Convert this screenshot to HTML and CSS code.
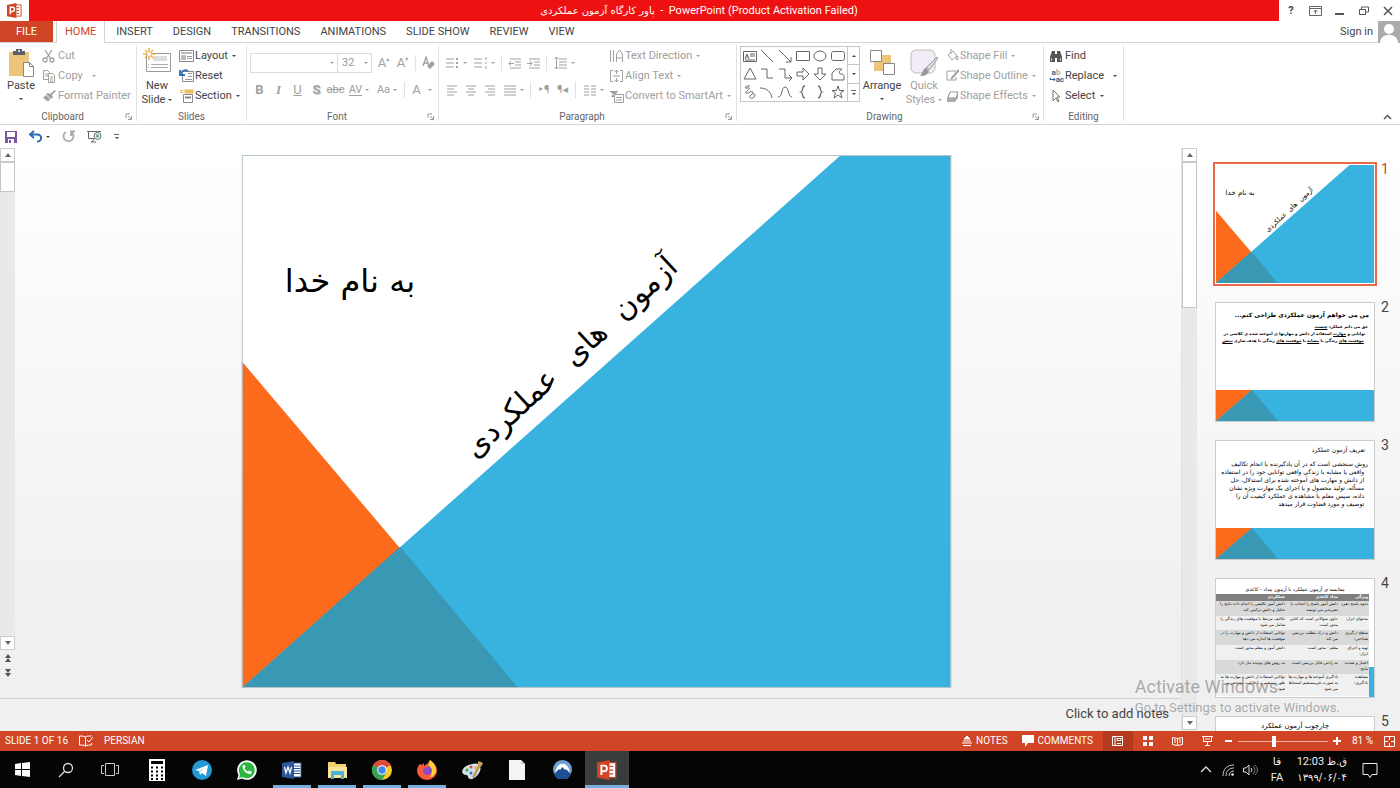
FILE: index.html
```
<!DOCTYPE html>
<html lang="en">
<head>
    <meta charset="utf-8">
    <title>PowerPoint</title>
    <link rel="stylesheet" href="styles.css">
</head>
<body>
    <svg class="defs" aria-hidden="true">
        <symbol id="ppt" viewBox="0 0 16 16"><path d="M9 2h6v12H9z" fill="#fff" stroke="#d04525"/><path d="M10 5h3M10 8h3M10 11h3" stroke="#d04525"/><path d="M0 2l10-2v16L0 14z" fill="#d04525"/><path d="M3.500 12V4.500h2.200a2 2 0 0 1 0 4.500H3.500" fill="none" stroke="#fff" stroke-width="1.500"/></symbol>
        <symbol id="launch" viewBox="0 0 8 8"><path d="M1 5V1h4M3 3l3 3M6.500 3v3.500H3" fill="none" stroke="currentColor"/></symbol>
        <symbol id="up" viewBox="0 0 8 8"><path d="M1 6l3-4 3 4z" fill="currentColor"/></symbol>
        <symbol id="down" viewBox="0 0 8 8"><path d="M1 2l3 4 3-4z" fill="currentColor"/></symbol>
        <symbol id="lines" viewBox="0 0 14 12"><path d="M1 2h12M1 5h12M1 8h12M1 11h12" stroke="currentColor"/></symbol>
        <symbol id="band" viewBox="0 0 158 118"><path d="M0 87h158v31H0z" fill="#38b3e0"/><path d="M0 87h36L0 118z" fill="#fb6b1b"/><path d="M36 87l26 31H0z" fill="#3998b3"/></symbol>
    </svg>

    <header class="titlebar">
        <svg class="app-icon" width="15" height="15"><use href="#ppt"/></svg>
        <h1 class="title"><bdi class="fa">پاور کارگاه آزمون عملکردی</bdi>&nbsp; - &nbsp;PowerPoint (Product Activation Failed)</h1>
        <div class="window-buttons">
            <button aria-label="Help"><b>?</b></button>
            <button aria-label="Ribbon options"><svg width="13" height="10" viewBox="0 0 13 10" fill="none" stroke="#666"><path d="M.5.500h12v9H.500zM.500 2.500h12M6.500 8V4M4.500 6l2-2 2 2"/></svg></button>
            <button aria-label="Minimize"><svg width="10" height="10" viewBox="0 0 10 10"><path d="M0 8h9" stroke="#555" stroke-width="2"/></svg></button>
            <button aria-label="Restore"><svg width="10" height="10" viewBox="0 0 10 10" fill="none" stroke="#555"><path d="M.5 3.500h6v5h-6zM2.500 3V1h7v5H7"/></svg></button>
            <button aria-label="Close"><svg width="10" height="10" viewBox="0 0 10 10"><path d="M1 1l8 8M9 1l-8 8" stroke="#555" stroke-width="1.500"/></svg></button>
        </div>
    </header>

    <nav class="tabs">
        <button class="tab-file">FILE</button>
        <button class="tab active">HOME</button>
        <button class="tab">INSERT</button>
        <button class="tab">DESIGN</button>
        <button class="tab">TRANSITIONS</button>
        <button class="tab">ANIMATIONS</button>
        <button class="tab">SLIDE SHOW</button>
        <button class="tab">REVIEW</button>
        <button class="tab">VIEW</button>
        <a class="sign-in" href="#">Sign in</a>
        <svg class="avatar" width="22" height="22" viewBox="0 0 22 22"><path d="M0 0h22v22H0z" fill="#ababab"/><circle cx="11" cy="8" r="5" fill="#fff"/><path d="M2 22c0-11 18-11 18 0z" fill="#fff"/></svg>
    </nav>

    <div class="ribbon">
        <section class="group clipboard">
            <div class="group-body">
                <button class="big">
                    <svg width="27" height="30" viewBox="0 0 27 30"><path d="M1 4h20v24H1z" fill="#ecc57a"/><path d="M5 3h3V1h6v2h3v4H5z" fill="#5a5f6b"/><circle cx="11" cy="3" r="1" fill="#fff"/><path d="M15.500 14.500h6l4 4v10h-10z" fill="#fff" stroke="#888"/><path d="M21.500 14.500v4h4" fill="none" stroke="#888"/></svg>
                    Paste<i class="caret"></i>
                </button>
                <div class="stack off">
                    <button><svg width="14" height="14" viewBox="0 0 14 14" fill="none" stroke="currentColor" stroke-width="1.300"><path d="M3 1l6 9M10 1L4 10"/><circle cx="3" cy="11" r="2"/><circle cx="10" cy="11" r="2"/></svg>Cut</button>
                    <button><svg width="14" height="14" viewBox="0 0 14 14" fill="#fff" stroke="currentColor"><path d="M1.500 1.500h4l2 2v7h-6zM3 5h3M3 7h3"/><path d="M6.500 4.500h4l2 2v7h-6zM8 8h3M8 10h3M8 12h3"/></svg>Copy<i class="caret far"></i></button>
                    <button><svg width="14" height="14" viewBox="0 0 14 14" fill="currentColor"><path d="M13 1l1 1-4 4 1 2-2 2-5-5 2-1 2 1zM4 6l4 4-2 3-1-2-1 1-1-2-2-1z"/></svg>Format Painter</button>
                </div>
            </div>
            <div class="group-label">Clipboard<button aria-label="Clipboard options"><svg width="8" height="8"><use href="#launch"/></svg></button></div>
        </section>

        <section class="group slides">
            <div class="group-body">
                <button class="big">
                    <svg width="29" height="30" viewBox="0 0 29 30"><path d="M3.500 5.500h24v18h-24z" fill="#fff" stroke="#999"/><path d="M10 8h14v5H10z" fill="#ddd"/><path d="M8 16.500h17M8 19.500h17M5 16.500h1M5 19.500h1" stroke="#aaa"/><path d="M6 0v12M0 6h12M2 2l8 8M10 2l-8 8" stroke="#e8b34f" stroke-width="1.500"/><circle cx="6" cy="6" r="2" fill="#fff"/></svg>
                    New<span>Slide<i class="caret"></i></span>
                </button>
                <div class="stack">
                    <button><svg width="15" height="14" viewBox="0 0 15 14"><path d="M.5 1.500h14v11H.500z" fill="#fff" stroke="#888"/><path d="M2 3h11v2H2zM2 6h5v5H2z" fill="#bbb"/><path d="M8 7.500h5M8 9.500h5" stroke="#999"/></svg>Layout<i class="caret"></i></button>
                    <button><svg width="15" height="14" viewBox="0 0 15 14"><path d="M3.500 2.500h11v10h-11z" fill="#fff" stroke="#888"/><path d="M9 4.500h4M9 7.500h4M6 10.500h7" stroke="#999"/><path d="M1 1v5h5M1 6c1-4 5-6 8-4" fill="none" stroke="#2e75b6" stroke-width="1.800"/></svg>Reset</button>
                    <button><svg width="15" height="14" viewBox="0 0 15 14"><path d="M1 1.500h3M1 3.500h3M6 1h8v3H6z" fill="#ecc57a" stroke="#e8b34f"/><path d="M4.500 5.500h9v8h-9z" fill="#fff" stroke="#888"/><path d="M6 8.500h6" stroke="#888" stroke-width="2"/></svg>Section<i class="caret"></i></button>
                </div>
            </div>
            <div class="group-label">Slides</div>
        </section>

        <section class="group font">
            <div class="group-body two-rows off">
                <div class="tools">
                    <span class="combo font-name"><select aria-label="Font"><option></option></select><i class="caret"></i></span>
                    <span class="combo font-size"><select aria-label="Font size"><option>32</option></select><i class="caret"></i></span>
                    <button class="letter grow">A<sup>▴</sup></button>
                    <button class="letter">A<sup>▾</sup></button>
                    <hr>
                    <button aria-label="Clear formatting"><svg width="14" height="14" viewBox="0 0 14 14"><path d="M1 10l3-9 3 9M2 7h4" fill="none" stroke="currentColor" stroke-width="1.300"/><path d="M5 10l5-5 3 3-5 5z" fill="currentColor"/></svg></button>
                </div>
                <div class="tools">
                    <button class="letter"><b>B</b></button>
                    <button class="letter serif"><b><i>I</i></b></button>
                    <button class="letter"><u>U</u></button>
                    <button class="letter shadow"><b>S</b></button>
                    <button><s>abc</s></button>
                    <button class="wide"><span class="spacing">AV</span><i class="caret"></i></button>
                    <button class="wide">Aa<i class="caret"></i></button>
                    <hr>
                    <button class="wide letter">A<i class="caret far"></i></button>
                </div>
            </div>
            <div class="group-label">Font<button aria-label="Font options"><svg width="8" height="8"><use href="#launch"/></svg></button></div>
        </section>

        <section class="group paragraph">
            <div class="group-body">
                <div class="two-rows off">
                    <div class="tools">
                        <button class="wide" aria-label="Bullets"><svg width="14" height="12" viewBox="0 0 14 12"><path d="M0 2h8M0 6h8M0 10h8" stroke="currentColor"/><path d="M10 1h2v2h-2zM10 5h2v2h-2zM10 9h2v2h-2z" fill="currentColor"/></svg><i class="caret"></i></button>
                        <button class="wide" aria-label="Numbering"><svg width="14" height="12" viewBox="0 0 14 12"><path d="M0 2h8M0 6h8M0 10h8M12 0v3M12 5v2M12 9v3" stroke="currentColor"/></svg><i class="caret"></i></button>
                        <hr>
                        <button aria-label="Decrease indent"><svg width="14" height="12" viewBox="0 0 14 12"><path d="M2 2h11M7 5h6M7 8h6M2 11h11M1 6.500h5M3 4L1 6.500 3 9" fill="none" stroke="currentColor"/></svg></button>
                        <button aria-label="Increase indent"><svg width="14" height="12" viewBox="0 0 14 12"><path d="M2 2h11M7 5h6M7 8h6M2 11h11M0 6.500h5M3 4l2 2.500L3 9" fill="none" stroke="currentColor"/></svg></button>
                        <hr>
                        <button class="wide" aria-label="Line spacing"><svg width="14" height="14" viewBox="0 0 14 14"><path d="M5 3h8M5 6h8M5 9h8M5 12h8M2.500 1v12M.500 3l2-2 2 2M.500 11l2 2 2-2" fill="none" stroke="currentColor"/></svg><i class="caret"></i></button>
                    </div>
                    <div class="tools">
                        <button aria-label="Align left"><svg width="12" height="12" viewBox="0 0 12 12"><path d="M1 2h10M1 5h7M1 8h10M1 11h7" stroke="currentColor"/></svg></button>
                        <button aria-label="Center"><svg width="12" height="12" viewBox="0 0 12 12"><path d="M1 2h10M3 5h6M1 8h10M3 11h6" stroke="currentColor"/></svg></button>
                        <button aria-label="Align right"><svg width="12" height="12" viewBox="0 0 12 12"><path d="M1 2h10M4 5h7M1 8h10M4 11h7" stroke="currentColor"/></svg></button>
                        <button class="wide" aria-label="Justify"><svg width="14" height="12"><use href="#lines"/></svg><i class="caret"></i></button>
                        <hr>
                        <button aria-label="Left to right">‣¶</button>
                        <button aria-label="Right to left">¶◂</button>
                        <hr>
                        <button class="wide" aria-label="Columns"><svg width="14" height="12" viewBox="0 0 14 12"><path d="M1 2h5M1 5h5M1 8h5M1 11h5M8 2h5M8 5h5M8 8h5M8 11h5" stroke="currentColor"/></svg><i class="caret"></i></button>
                    </div>
                </div>
                <div class="stack off">
                    <button><svg width="15" height="14" viewBox="0 0 15 14" fill="none" stroke="currentColor"><path d="M1.500 1v12M4.500 1v12M7.500 5v8M13.500 5v8M7.500 9h6M7.500 5l3-4 3 4"/></svg>Text Direction<i class="caret"></i></button>
                    <button><svg width="15" height="14" viewBox="0 0 15 14" fill="none" stroke="currentColor"><path d="M4 1.500H1.500v11H4M11 1.500h2.500v11H11M4 7h7M7.500 1v4M7.500 9v4M5.500 3l2-2 2 2M5.500 11l2 2 2-2"/></svg>Align Text<i class="caret"></i></button>
                    <button><svg width="15" height="14" viewBox="0 0 15 14"><path d="M0 2h9l-2 3H4l2 3H2l2-3z" fill="currentColor"/><path d="M5.500 5.500h9v8h-9zM7 8.500h6M7 11h6" fill="#fff" stroke="currentColor"/></svg>Convert to SmartArt<i class="caret"></i></button>
                </div>
            </div>
            <div class="group-label">Paragraph<button aria-label="Paragraph options"><svg width="8" height="8"><use href="#launch"/></svg></button></div>
        </section>

        <section class="group drawing">
            <div class="group-body">
                <div class="gallery">
                    <div class="shapes">
                        <svg viewBox="0 0 16 16"><path d="M1.500 3.500h13v10h-13z"/><path d="M3 11l2-5 2 5M4 9h2M8 6h5M8 8h5M3 12h10"/></svg>
                        <svg viewBox="0 0 16 16"><path d="M2 2l12 12"/></svg>
                        <svg viewBox="0 0 16 16"><path d="M2 2l12 12M14 9v5H9"/></svg>
                        <svg viewBox="0 0 16 16"><path d="M1.500 3.500h13v9h-13z"/></svg>
                        <svg viewBox="0 0 16 16"><ellipse cx="8" cy="8" rx="6" ry="5"/></svg>
                        <svg viewBox="0 0 16 16"><rect x="1.500" y="3.500" width="13" height="9" rx="2"/></svg>
                        <svg viewBox="0 0 16 16"><path d="M8 2l6 11H2z"/></svg>
                        <svg viewBox="0 0 16 16"><path d="M2 3h6v9h6"/></svg>
                        <svg viewBox="0 0 16 16"><path d="M2 3h6v9h6M12 9l3 3-3 3"/></svg>
                        <svg viewBox="0 0 16 16"><path d="M2 6h6V2l6 6-6 6v-4H2z"/></svg>
                        <svg viewBox="0 0 16 16"><path d="M6 2v6H2l6 6 6-6h-4V2z"/></svg>
                        <svg viewBox="0 0 16 16"><path d="M2 14V7l4-4h6c-4 3-3 5-1 5 3 0 3 2 3 3v3z"/></svg>
                        <svg viewBox="0 0 16 16"><path d="M8 2C3 1 2 5 5 4s3 1 0 3 0 3 3 1 4 1 1 3 0 4 2 3 3-5 0-4"/></svg>
                        <svg viewBox="0 0 16 16"><path d="M1 4c7 0 11 4 12 10"/></svg>
                        <svg viewBox="0 0 16 16"><path d="M1 13C6 13 4 3 8 3s3 10 7 10"/></svg>
                        <svg viewBox="0 0 16 16"><path d="M10 2c-4 0-1 5-4 6 3 1 0 6 4 6" stroke-width="1.300"/></svg>
                        <svg viewBox="0 0 16 16"><path d="M6 2c4 0 1 5 4 6-3 1 0 6-4 6" stroke-width="1.300"/></svg>
                        <svg viewBox="0 0 16 16"><path d="M8 2l1.500 4.500H14L10.500 9l1.500 5-4-3-4 3 1.500-5L2 6.500h4.500z"/></svg>
                    </div>
                    <div class="gallery-scroll">
                        <button aria-label="Previous shapes"><i class="caret flip"></i></button>
                        <button aria-label="Next shapes"><i class="caret"></i></button>
                        <button class="more" aria-label="More shapes"><i class="caret"></i></button>
                    </div>
                </div>
                <button class="big">
                    <svg width="28" height="30" viewBox="0 0 28 30"><path d="M11 7h12v8H11zM6 14h10v9H6z" fill="#ecc57a"/><path d="M2.500 2.500h11v11h-11zM15.500 15.500h11v11h-11z" fill="#fff" stroke="#888"/></svg>
                    Arrange<i class="caret"></i>
                </button>
                <button class="big quick off">
                    <svg width="28" height="30" viewBox="0 0 28 30"><rect x="1" y="2" width="24" height="23" rx="5" fill="#f1ecf5" stroke="#bbb"/><path d="M27 9l1 1-9 12-3-2z" fill="#ddd" stroke="#999"/><path d="M16 20l3 3c-2 5-6 5-9 5 3-2 2-7 6-8z" fill="#999"/></svg>
                    Quick<span>Styles<i class="caret"></i></span>
                </button>
                <div class="stack off">
                    <button><svg width="13" height="14" viewBox="0 0 13 14" fill="none" stroke="currentColor"><path d="M2 6l5-4 4 5-5 4zM5 5V0M11 7c2 3 1 4 0 4s-1-2 0-4"/></svg>Shape Fill<i class="caret"></i></button>
                    <button><svg width="13" height="14" viewBox="0 0 13 14" fill="none" stroke="currentColor"><path d="M10 2H1v9h9V8"/><path d="M13 1L5 10" stroke-width="2"/></svg>Shape Outline<i class="caret"></i></button>
                    <button><svg width="13" height="14" viewBox="0 0 13 14"><path d="M1 9l3-6h8v6l-3 4H1z" fill="#aaa"/><path d="M4 3h8l-2 6H2z" fill="#fff" stroke="#999"/></svg>Shape Effects<i class="caret"></i></button>
                </div>
            </div>
            <div class="group-label">Drawing<button aria-label="Drawing options"><svg width="8" height="8"><use href="#launch"/></svg></button></div>
        </section>

        <section class="group editing">
            <div class="group-body">
                <div class="stack">
                    <button><svg width="14" height="14" viewBox="0 0 14 14" fill="#555"><path d="M3 2h3v3h2V2h3l2 6v5H8V9H6v4H1V8z"/><path d="M2.500 9v3M11.500 9v3" stroke="#ccc"/></svg>Find</button>
                    <button><span class="replace-icon"><span>a<em>b</em></span><span>↪ac</span></span>Replace<i class="caret far"></i></button>
                    <button><svg width="14" height="14" viewBox="0 0 14 14"><path d="M4 1v11l3-3 2 4 1-1-2-4h3z" fill="#fff" stroke="#777"/></svg>Select<i class="caret"></i></button>
                </div>
            </div>
            <div class="group-label">Editing</div>
        </section>
        <button class="collapse" aria-label="Collapse ribbon"><svg width="9" height="6" viewBox="0 0 9 6"><path d="M1 5l3.500-3.500L8 5" fill="none" stroke="#555" stroke-width="1.500"/></svg></button>
    </div>

    <div class="quick-access">
        <button aria-label="Save"><svg width="12" height="12" viewBox="0 0 12 12"><path d="M0 0h12v12H0z" fill="#7b55a3"/><path d="M2 1h8v5H2zM3 8h6v4H3z" fill="#fff"/><path d="M4 9h2v3H4z" fill="#7b55a3"/></svg></button>
        <button aria-label="Undo"><svg width="14" height="13" viewBox="0 0 14 13"><path d="M5 1L1 4.500 5 8M1 4.500h7c6 0 5 7 0 7" fill="none" stroke="#2b6cb0" stroke-width="2"/></svg><i class="caret"></i></button>
        <button aria-label="Redo"><svg width="13" height="13" viewBox="0 0 13 13"><path d="M4 2a5 5 0 1 0 5 0M9 6V1.500h4" fill="none" stroke="#aaa" stroke-width="1.800"/></svg></button>
        <button aria-label="Start slide show"><svg width="15" height="13" viewBox="0 0 15 13" fill="none" stroke="#666"><path d="M0 1.500h14M1.500 2v6.500h6M5 12l2-3M4 12h5"/><circle cx="10.500" cy="6" r="3.500" fill="#e4efe9" stroke="#55856d"/><path d="M9.500 4v4l3-2z" fill="#55856d" stroke="none"/></svg></button>
        <button class="more" aria-label="Customize"><i class="caret"></i></button>
    </div>

    <main class="workspace">
        <div class="editor">
            <div class="stage">
                <div class="scrollbar short">
                    <button aria-label="Scroll up"><svg width="8" height="8"><use href="#up"/></svg></button>
                    <div class="track"><div class="handle"></div></div>
                    <button aria-label="Scroll down"><svg width="8" height="8"><use href="#down"/></svg></button>
                    <button class="plain" aria-label="Previous slide"><svg width="8" height="10" viewBox="0 0 8 10"><path d="M1 5l3-4 3 4zM1 9l3-4 3 4z" fill="#555"/></svg></button>
                    <button class="plain" aria-label="Next slide"><svg width="8" height="10" viewBox="0 0 8 10"><path d="M1 1l3 4 3-4zM1 5l3 4 3-4z" fill="#555"/></svg></button>
                </div>
                <div class="canvas">
                    <svg class="slide" viewBox="0 0 708 532">
                        <g id="slide-one">
                            <path d="M0 0h708v532H0z" fill="#fff"/>
                            <path d="M0 206l276 326H0z" fill="#fb6b1b"/>
                            <path d="M598 0h110v532H0z" fill="#38b3e0"/>
                            <path d="M158 391l118 141H0z" fill="#3998b3"/>
                            <text class="slide-title" x="108" y="137">به نام خدا</text>
                            <text class="slide-art" transform="translate(335 209) rotate(-43)">آزمون  های  عملکردی</text>
                        </g>
                        <path d="M.5.500h707v531H.500z" fill="none" stroke="#b5c4c9"/>
                    </svg>
                </div>
            </div>
            <div class="notes">Click to add notes</div>
        </div>

        <aside class="panel">
            <div class="scrollbar">
                <button aria-label="Scroll up"><svg width="8" height="8"><use href="#up"/></svg></button>
                <div class="track"><div class="handle tall"></div></div>
                <button aria-label="Scroll down"><svg width="8" height="8"><use href="#down"/></svg></button>
            </div>
            <ol class="thumbs">
                <li class="selected">
                    <div class="thumb"><svg viewBox="0 0 708 532" preserveAspectRatio="none"><use href="#slide-one"/></svg></div>
                    <span>1</span>
                </li>
                <li>
                    <div class="thumb" dir="rtl" lang="fa">
                        <svg><use href="#band"/></svg>
                        <h2 class="bold">من می خواهم آزمون عملکردی طراحی کنم...</h2>
                        <p class="small">حق می دانم عملکرد <u>چیست</u><br>&nbsp; توانایی و <u>مهارت</u> استفاده از دانش و مهارتها ی آموخته شده ی کلاسی در<br>&nbsp; &nbsp;<u>موقعیت های</u> زندگی یا <u>مشابه</u> با <u>موقعیت های</u> زندگی با هدف سازی <u>بینش</u></p>
                    </div>
                    <span>2</span>
                </li>
                <li>
                    <div class="thumb" dir="rtl" lang="fa">
                        <svg><use href="#band"/></svg>
                        <h2>تعریف آزمون عملکرد</h2>
                        <p>روش سنجشی است که در آن یادگیرنده با انجام تکالیف<br>&nbsp; واقعی یا مشابه با زندگی واقعی توانایی خود را در استفاده<br>&nbsp; از دانش و مهارت های آموخته شده برای استدلال، حل<br>&nbsp; مسأله، تولید محصول و یا اجرای یک مهارت ویژه نشان<br>&nbsp; داده، سپس معلم با مشاهده ی عملکرد کیفیت آن را<br>&nbsp; توصیف و مورد قضاوت قرار میدهد</p>
                    </div>
                    <span>3</span>
                </li>
                <li>
                    <div class="thumb compare" dir="rtl" lang="fa">
                        <h2>مقایسه ی آزمون عملکرد با آزمون مداد - کاغذی</h2>
                        <table>
                            <tr><th>ویژگی</th><th>مداد کاغذی</th><th>عملکردی</th></tr>
                            <tr><td>نحوه پاسخ دهی:</td><td>دانش آموز پاسخ را انتخاب یا تشریحی می نویسد</td><td>دانش آموز تکلیفی را انجام داده نتایج را تحلیل و دانش ترکیبی کند.</td></tr>
                            <tr><td>محتوای ابزار:</td><td>حاوی سؤالاتی است که کتابی محور است</td><td>تکالیف مرتبط با موقعیت های زندگی را شامل می شود</td></tr>
                            <tr><td>سطح درگیری شناختی:</td><td>دانش و درک مطلب بررسی می کند</td><td>توانایی استفاده از دانش و مهارت را در موقعیت ها اندازه می دهد</td></tr>
                            <tr><td>تهیه و اجرای ابزار:</td><td>معلم - محور است</td><td>دانش آموز و معلم محور است</td></tr>
                            <tr><td>اعتبار و صحت نتایج:</td><td>به راحتی قابل بررسی است</td><td>به روش های پیچیده نیاز دارد</td></tr>
                            <tr><td>مشاهده یادگیری:</td><td>یادگیری آموخته ها و مهارت ها به صورت غیرمستقیم استنباط می شود</td><td>توانایی استفاده از دانش و مهارت ها به طور مستقیم و با قابلیت مشخص می شود</td></tr>
                        </table>
                    </div>
                    <span>4</span>
                </li>
                <li>
                    <div class="thumb" dir="rtl" lang="fa"><h2 class="middle">چارچوب آزمون عملکرد</h2></div>
                    <span>5</span>
                </li>
            </ol>
        </aside>
        <div class="watermark">
            <p class="watermark-title">Activate Windows</p>
            <p>Go to Settings to activate Windows.</p>
        </div>
    </main>

    <footer class="status">
        <span>SLIDE 1 OF 16</span>
        <button aria-label="Spelling"><svg width="14" height="12" viewBox="0 0 14 12" fill="none" stroke="#fff"><path d="M6.500 2c-2-1-4-1-6-1v9c2 0 4 0 6 1zM6.500 2c1-1 3-1 6-1M6.500 11c2-1 4-1 6-1V8M8 5l2 2 4-5"/></svg></button>
        <button>PERSIAN</button>
        <div class="status-right">
            <button><svg width="10" height="10" viewBox="0 0 10 10"><path d="M5 0l3 3H2zM1 5h8M0 7h10M1 9.500h8" fill="#fff" stroke="#fff"/></svg>NOTES</button>
            <button><svg width="12" height="12" viewBox="0 0 12 12"><path d="M0 0h12v8H6l-3 4V8H0z" fill="#fff"/></svg>COMMENTS</button>
            <button class="view on" aria-label="Normal"><svg width="11" height="10" viewBox="0 0 11 10"><path d="M.5.500h10v9H.500zM3 0v10M5 2.500h4v2H5zM5 7.500h4" fill="none" stroke="#fff"/></svg></button>
            <button class="view" aria-label="Slide sorter"><svg width="10" height="10" viewBox="0 0 10 10"><path d="M0 0h4v4H0zM6 0h4v4H6zM0 6h4v4H0zM6 6h4v4H6z" fill="#fff"/></svg></button>
            <button class="view" aria-label="Reading view"><svg width="11" height="10" viewBox="0 0 11 10" fill="none" stroke="#fff"><path d="M.5 1.500l5 1 5-1v7l-5 1-5-1zM5.500 2v7M2 4h2M2 6h2M7 4h2M7 6h2"/></svg></button>
            <button class="view" aria-label="Slide show"><svg width="11" height="10" viewBox="0 0 11 10" fill="none" stroke="#fff"><path d="M0 .500h11M1.500 1v4.500h8V1M5.500 5v4M3 9.500h5M3 3h5"/></svg></button>
            <button class="zoom-out" aria-label="Zoom out"><svg width="8" height="8" viewBox="0 0 8 8"><path d="M0 4h7" stroke="#fff" stroke-width="2"/></svg></button>
            <input class="zoom" type="range" min="0" max="100" value="40" aria-label="Zoom">
            <button aria-label="Zoom in"><svg width="8" height="8" viewBox="0 0 8 8"><path d="M0 4h8M4 0v8" stroke="#fff" stroke-width="2"/></svg></button>
            <span class="percent">81 %</span>
            <button aria-label="Fit to window"><svg width="11" height="11" viewBox="0 0 11 11" fill="none" stroke="#fff"><path d="M.5.500h10v10H.500zM5.500 0v4M5.500 7v4M0 5.500h4M7 5.500h4"/></svg></button>
        </div>
    </footer>

    <div class="taskbar">
        <button aria-label="Start"><svg width="15" height="15" viewBox="0 0 15 15"><path d="M0 2l6-1v6H0zM7 1l8-1v7H7zM0 8h6v6l-6-1zM7 8h8v7l-8-1z" fill="#fff"/></svg></button>
        <button aria-label="Search"><svg width="16" height="16" viewBox="0 0 16 16"><circle cx="10" cy="6" r="4.500" fill="none" stroke="#ddd" stroke-width="1.300"/><path d="M7 9l-6 6" stroke="#ddd" stroke-width="1.300"/></svg></button>
        <button aria-label="Task view"><svg width="18" height="15" viewBox="0 0 18 15"><path d="M4.500 1.500h9v12h-9zM3 3.500H.500v8H3M15 3.500h2.500v8H15" fill="none" stroke="#ccc"/></svg></button>
        <div class="apps">
            <button aria-label="Calculator"><svg width="16" height="22" viewBox="0 0 16 22"><path d="M0 0h16v22H0z" fill="#fff"/><path d="M2 2h12v3H2z"/><path d="M2 8.500h12M2 12.500h12M2 16.500h12M2 20h12" stroke="#000" stroke-width="2" stroke-dasharray="2 3"/></svg></button>
            <button aria-label="Telegram"><svg width="20" height="20" viewBox="0 0 20 20"><circle cx="10" cy="10" r="10" fill="#2399d5"/><path d="M3 10l13-5-2 11-4-3-2 2-1-4z" fill="#fff"/><path d="M7 11l6-4-5 5z" fill="#a9cde4"/></svg></button>
            <button aria-label="WhatsApp"><svg width="20" height="20" viewBox="0 0 20 20"><path d="M0 20l1.500-5A9.800 9.800 0 1 1 5 18.500z" fill="#fff"/><path d="M2 18l1-3.500a8 8 0 1 1 2.500 2.500z" fill="#2cb742"/><path d="M6 5c-2 3 3 10 8 9l1-2-3-1.500-1 1c-1 0-3-2-3.500-3.500l1-1L7.500 5z" fill="#fff"/></svg></button>
            <button class="open" aria-label="Word"><svg width="20" height="18" viewBox="0 0 20 18"><path d="M11 2h8v14h-8z" fill="#fff" stroke="#2b579a"/><path d="M12 5h6M12 7.500h6M12 10h6M12 12.500h6" stroke="#2b579a"/><path d="M0 2l12-2v18L0 16z" fill="#2b579a"/><path d="M2.500 6l1.500 6 2-6 2 6 1.500-6" fill="none" stroke="#fff" stroke-width="1.300"/></svg></button>
            <button class="open" aria-label="File Explorer"><svg width="20" height="18" viewBox="0 0 20 18"><path d="M1 1h7l1 2h10v14H1z" fill="#f5d06b"/><path d="M1 6h19v11H1z" fill="#fbe49a"/><path d="M4 18v-7q0-1 1-1h11q1 0 1 1v7h-3v-4H7v4z" fill="#4ab1d8"/></svg></button>
            <button class="open" aria-label="Chrome"><svg width="20" height="20" viewBox="0 0 20 20"><circle cx="10" cy="10" r="10" fill="#f9c926"/><path d="M10 10L1.300 5A10 10 0 0 1 18.700 5z" fill="#dd4b3e"/><path d="M1.300 5A10 10 0 0 0 10 20l4.500-7.500L10 10z" fill="#35a256"/><circle cx="10" cy="10" r="4.800" fill="#fff"/><circle cx="10" cy="10" r="3.800" fill="#4285f4"/></svg></button>
            <button class="open" aria-label="Firefox"><svg width="20" height="20" viewBox="0 0 20 20"><path d="M3 4l2 1 2-2v3l4-3 2-3c5 4 7 6 7 11a10 9 0 0 1-20 0C0 8 1 6 3 4z" fill="#fb5b3a"/><path d="M13 0c5 4 6 7 6 11-1 4-4 6-6 6 3-4 1-7-2-10z" fill="#ffd13b"/><path d="M6 10a4.500 4.500 0 1 0 5-4l-2 2H7z" fill="#8b4bc9"/></svg></button>
            <button aria-label="Paint"><svg width="21" height="20" viewBox="0 0 21 20"><path d="M10 4c6-2 10 2 8 7s-7 9-10 8-1-4-4-4-5-3-3-6 5-4 9-5z" fill="#cfe0e8"/><circle cx="5" cy="10" r="1.500" fill="#4a9c4e"/><circle cx="9" cy="7" r="1.500" fill="#d84c3c"/><circle cx="14" cy="8" r="1.500" fill="#e8b83a"/><circle cx="9" cy="13" r="1.500" fill="#356fb3"/><path d="M19 2l-8 16" stroke="#c08a4a" stroke-width="2"/><path d="M16 1l5 2-2 4-3-2z" fill="#c9a35e"/></svg></button>
            <button aria-label="Document"><svg width="16" height="20" viewBox="0 0 16 20"><path d="M0 0h12l4 4v16H0z" fill="#f4f4f4"/><path d="M12 0v4h4" fill="#ccc"/></svg></button>
            <button aria-label="NordVPN"><svg width="19" height="19" viewBox="0 0 19 19"><circle cx="9.500" cy="9.500" r="9.500" fill="#6fa3d8"/><path d="M2 14l1-5c3-7 10-7 13 0l1 5z" fill="#fff"/><path d="M1 14l5-5 1 1 2.500-3 2.500 3 1-1 5 5a9 9 0 0 1-17 0z" fill="#1f4f94"/></svg></button>
            <button class="open current" aria-label="PowerPoint"><svg width="20" height="20"><use href="#ppt"/></svg></button>
        </div>
        <div class="tray">
            <button aria-label="Hidden icons"><svg width="12" height="7" viewBox="0 0 12 7"><path d="M1 6l5-5 5 5" fill="none" stroke="#ddd" stroke-width="1.300"/></svg></button>
            <button aria-label="Network"><svg width="12" height="12" viewBox="0 0 12 12" fill="none" stroke="#ccc"><path d="M1 12C1 5 5 1 12 1M4 12c0-5 3-8 8-8M7 12c0-3 2-5 5-5"/><circle cx="10.500" cy="10.500" r="1" fill="#fff"/></svg></button>
            <button aria-label="Volume"><svg width="15" height="12" viewBox="0 0 15 12" fill="none" stroke="#ddd"><path d="M.5 4v4H3l3 3V1L3 4zM8 4q2 2 0 4"/><path d="M10 2q4 4 0 8M12 1q5 5 0 10" stroke="#777"/></svg></button>
            <div class="lang"><bdi class="fa">فا</bdi><span>FA</span></div>
            <div class="clock"><span>12:03 <bdi class="fa">ق.ظ</bdi></span><bdi class="fa date">۱۳۹۹/۰۶/۰۴</bdi></div>
            <button aria-label="Notifications"><svg width="16" height="16" viewBox="0 0 16 16"><path d="M1 1.500h14v11H10l-2 3-2-3H1z" fill="none" stroke="#eee"/></svg></button>
        </div>
    </div>
</body>
</html>
```
FILE: styles.css
```
* {
    box-sizing: border-box;
}

body {
    display: flex;
    flex-direction: column;
    height: 100vh;
    margin: 0;
    overflow: hidden;
    background-color: #fff;
    color: #444;
    font: 11px/14px Roboto, "DejaVu Sans", sans-serif;
    white-space: nowrap;
}

button, select {
    display: flex;
    align-items: center;
    margin: 0;
    padding: 0;
    border: 0;
    background: none;
    color: inherit;
    font: inherit;
}

svg {
    flex: none;
}

h1, h2, p, ol {
    margin: 0;
    padding: 0;
    font-weight: normal;
}

.defs {
    position: absolute;
    width: 0;
    height: 0;
}

.fa {
    font-family: "DejaVu Sans", sans-serif;
}

.off {
    color: #a0a0a0;
}

.caret {
    flex: none;
    margin-left: 3px;
    border: 2px solid transparent;
    border-top-color: currentColor;
    border-bottom: 0;
}

.caret.far {
    margin-left: 7px;
}

.caret.flip {
    transform: rotate(180deg);
}

/* title bar */
.titlebar {
    display: flex;
    align-items: center;
    height: 21px;
}

.app-icon {
    margin: 0 7px;
}

.title {
    flex: 1;
    height: 21px;
    padding-left: 90px;
    background-color: #ee1111;
    color: #fff;
    font-size: 11px;
    line-height: 21px;
    text-align: center;
}

.title .fa {
    font-size: 10px;
}

.window-buttons {
    display: flex;
    width: 121px;
}

.window-buttons button {
    flex: 1;
    justify-content: center;
}

/* tabs */
.tabs {
    display: flex;
    height: 22px;
    border-bottom: 1px solid #d5d5d5;
}

.tab-file {
    justify-content: center;
    width: 53px;
    margin-right: 3px;
    background-color: #d04525;
    color: #fff;
}

.tab {
    height: 22px;
    padding: 0 10px;
}

.tab.active {
    margin-right: 1px;
    padding: 0 8px;
    border: 1px solid #d5d5d5;
    border-width: 0 1px;
    background-color: #fff;
    color: #d04525;
}

.sign-in {
    margin-left: auto;
    padding: 0 5px;
    color: #444;
    line-height: 22px;
    text-decoration: none;
}

/* ribbon */
.ribbon {
    display: flex;
    padding-top: 2px;
    height: 82px;
    border-bottom: 1px solid #d5d5d5;
}

.group {
    display: flex;
    flex-direction: column;
    height: 76px;
    border-right: 1px solid #e1e1e1;
}

.clipboard { width: 137px; }
.slides { width: 110px; }
.font { width: 192px; }
.paragraph { width: 298px; }
.drawing { width: 307px; }
.editing { width: 80px; }

.group-body {
    display: flex;
    flex: 1;
}

.group-label {
    display: flex;
    justify-content: center;
    height: 12px;
    color: #666;
    font-size: 10px;
    line-height: 16px;
}

.group-label button {
    margin-left: auto;
    margin-right: 3px;
    padding-top: 4px;
    color: #999;
}

.group-label::before {
    content: "";
    margin-left: auto;
}

.slides .group-label::before,
.editing .group-label::before {
    content: none;
}

.big {
    flex-direction: column;
    width: 42px;
    padding-top: 3px;
    line-height: 14px;
}

.big > svg {
    margin-bottom: 1px;
}

.big > .caret {
    margin: 5px 0 0;
}

.big span {
    display: flex;
    align-items: center;
}

.stack {
    display: flex;
    flex-direction: column;
    padding-top: 1px;
}

.stack button {
    height: 20px;
    gap: 1px;
}

.clipboard .stack button {
    gap: 2px;
}

.slides .big {
    width: 40px;
}

.drawing .big {
    width: 44px;
}

.drawing .quick {
    width: 40px;
}

.slides .stack {
    padding-left: 2px;
}

.paragraph .stack {
    padding-left: 2px;
}

.drawing .stack {
    padding-left: 2px;
}

.editing .stack {
    padding-left: 5px;
}

.editing .stack button {
    gap: 2px;
}

.two-rows {
    display: flex;
    flex-direction: column;
    gap: 7px;
    padding: 8px 0 0 3px;
}

.tools {
    display: flex;
    align-items: center;
    height: 20px;
}

.tools button {
    justify-content: center;
    width: 19px;
}

.tools .wide {
    width: 28px;
}

.tools hr {
    width: 1px;
    height: 16px;
    margin: 0 3px;
    border: 0;
    background-color: #e1e1e1;
}

.combo {
    display: flex;
    align-items: center;
    height: 20px;
    padding-right: 3px;
    border: 1px solid #dcdcdc;
}

.combo select {
    flex: 1;
    min-width: 0;
    height: 18px;
    padding: 0 4px;
    appearance: none;
    color: #999;
}

.combo .caret {
    margin: 0;
}

.font-name {
    width: 88px;
}

.font-size {
    width: 34px;
    border-left: 0;
}

.grow {
    margin-left: 2px;
}

.letter {
    font-size: 13px;
}

.letter sup {
    font-size: 6px;
    line-height: 6px;
    align-self: flex-start;
}

.serif {
    font-family: "Liberation Serif", serif;
}

.shadow {
    text-shadow: 1px 1px 0 #d5d5d5;
}

.spacing {
    border-bottom: 1px solid currentColor;
    line-height: 11px;
}

.gallery {
    display: flex;
    width: 120px;
    height: 56px;
    margin: 1px 0 0 3px;
    border: 1px solid #c6c6c6;
}

.shapes {
    display: grid;
    flex: 1;
    grid-template-columns: repeat(6, 1fr);
    align-items: center;
    justify-items: center;
}

.shapes svg {
    width: 16px;
    height: 16px;
    fill: none;
    stroke: #666;
}

.gallery-scroll {
    display: flex;
    flex-direction: column;
    width: 12px;
    border-left: 1px solid #c6c6c6;
}

.gallery-scroll button {
    flex: 1;
    justify-content: center;
}

.gallery-scroll .caret {
    margin: 0;
}

.gallery-scroll button + button {
    border-top: 1px solid #c6c6c6;
}

.more {
    flex-direction: column;
    justify-content: center;
    gap: 2px;
}

.more::before {
    content: "";
    width: 5px;
    height: 1px;
    background-color: #666;
}

.more .caret {
    margin: 0;
}

.replace-icon {
    width: 14px;
    color: #345f94;
    font-size: 8px;
    font-weight: bold;
    line-height: 7px;
}

.replace-icon span {
    display: block;
}

.replace-icon em {
    color: #aaa;
    font-style: normal;
}

.collapse {
    align-self: flex-end;
    margin: 0 8px 4px auto;
}

/* quick access toolbar */
.quick-access {
    display: flex;
    align-items: center;
    gap: 12px;
    height: 23px;
    padding-left: 5px;
}

/* workspace */
.workspace {
    position: relative;
    display: flex;
    flex: 1;
    min-height: 0;
    background: linear-gradient(#fff, #f0f0f0 80%);
}

.editor {
    display: flex;
    flex: 1;
    flex-direction: column;
    min-width: 0;
    border-right: 1px solid #e2e2e2;
}

.stage {
    display: flex;
    flex: 1;
    min-height: 0;
}

.canvas {
    flex: 1;
    min-width: 0;
    padding: 7px 3px 10px 0;
}

.slide {
    display: block;
    width: 100%;
    height: 100%;
}

.slide-title, .slide-art {
    direction: rtl;
    fill: #000;
    font-family: "DejaVu Sans", sans-serif;
    text-anchor: middle;
    white-space: pre;
}

.slide-title {
    font-size: 32px;
}

.slide-art {
    font-size: 30px;
}

.notes {
    height: 33px;
    padding: 0 12px;
    border-top: 1px solid #d0d0d0;
    font-size: 13px;
    line-height: 30px;
    text-align: right;
}

.scrollbar {
    display: flex;
    flex-direction: column;
    width: 15px;
    padding: 0 0 1px;
    color: #666;
}

.scrollbar button {
    justify-content: center;
    height: 14px;
    border: 1px solid #ccc;
    background-color: #fff;
}

.scrollbar .plain {
    height: 15px;
    border: 0;
    background: none;
}

.short {
    padding-bottom: 18px;
}

.track {
    flex: 1;
    background-color: #e9e9e9;
}

.handle {
    height: 30px;
    border: 1px solid #c6c6c6;
    background-color: #fff;
}

.handle.tall {
    height: 146px;
}

/* slide thumbnails */
.panel {
    display: flex;
    width: 218px;
    overflow: hidden;
}

.thumbs {
    display: flex;
    flex: 1;
    flex-direction: column;
    gap: 18px;
    padding: 16px 0 0 18px;
    list-style: none;
}

.thumbs li {
    display: flex;
    gap: 6px;
    font-size: 14px;
    line-height: 10px;
}

.thumb {
    display: grid;
    flex: none;
    grid-template-rows: auto 1fr;
    width: 160px;
    height: 120px;
    overflow: hidden;
    border: 1px solid #ccc;
    background-color: #fff;
    color: #000;
    font-family: "DejaVu Sans", sans-serif;
    font-size: 5px;
    line-height: 8px;
}

/* artwork shares the grid area with the text above it */
.thumb > svg {
    grid-area: 1 / 1 / 3 / 2;
    width: 158px;
    height: 118px;
}

.thumb h2 {
    grid-area: 1 / 1;
    padding: 4px 9px 5px;
    font-size: 6px;
    line-height: 10px;
}

.thumb p {
    grid-area: 2 / 1;
    padding: 0 6px;
    font-size: 6px;
    line-height: 8px;
}

.thumb .bold {
    padding: 7px 5px 3px;
    font-weight: bold;
}

.thumb .small {
    font-size: 4px;
    font-weight: bold;
    line-height: 7px;
}

.thumb .middle {
    font-size: 7px;
    text-align: center;
}

.selected {
    color: #d04525;
}

.selected .thumb {
    border-color: #fff;
    outline: 2px solid #e9694a;
}

.compare {
    background: linear-gradient(#38b3e0, #38b3e0) no-repeat right bottom / 5px 30px #fff;
}

.compare h2 {
    padding: 5px 0 0;
    font-size: 5px;
    text-align: center;
}

.compare table {
    width: 153px;
    height: 102px;
    margin-right: 5px;
    border-collapse: collapse;
    table-layout: fixed;
    background-color: #f0f0f0;
    font-size: 4px;
    line-height: 6px;
    white-space: normal;
}

.compare th, .compare td {
    padding: 0 1px;
    text-align: right;
    vertical-align: top;
}

.compare th {
    background-color: #7f7f7f;
    color: #fff;
}

.compare th:first-child { width: 30px; }
.compare th:nth-child(2) { width: 53px; }

.compare tr:nth-child(even) {
    background-color: #d9d9d9;
}

.watermark {
    position: absolute;
    right: 60px;
    bottom: 14px;
    color: rgba(120, 120, 120, 0.6);
    font-size: 13px;
    line-height: 18px;
    pointer-events: none;
}

.watermark-title {
    font-size: 18px;
    line-height: 24px;
}

/* status bar */
.status {
    display: flex;
    align-items: center;
    gap: 11px;
    height: 20px;
    padding: 0 5px;
    background-color: #d04525;
    color: #fff;
    font-size: 10px;
}

.status-right {
    display: flex;
    align-items: center;
    gap: 5px;
    height: 20px;
    margin-left: auto;
}

.status-right button {
    gap: 4px;
}

.status-right button + button {
    margin-left: 9px;
}

.status-right .view {
    justify-content: center;
    width: 30px;
    height: 20px;
    margin: 0 -3px 0 -2px;
}

.status-right .on {
    margin-left: 5px;
    background-color: #b33a1e;
}

.status-right .zoom-out {
    margin-left: 0;
}

.zoom {
    width: 90px;
    height: 14px;
    margin: 0;
    appearance: none;
    background: linear-gradient(#f0b5a6, #f0b5a6) no-repeat center / 100% 1px;
}

.zoom::-webkit-slider-thumb {
    appearance: none;
    width: 4px;
    height: 11px;
    background-color: #fff;
}

.percent {
    margin: 0 6px;
}

/* taskbar */
.taskbar {
    display: flex;
    height: 37px;
    background-color: #050505;
    color: #eee;
}

.taskbar button {
    justify-content: center;
    width: 44px;
    border-bottom: 3px solid transparent;
    border-top: 3px solid transparent;
}

.apps {
    display: flex;
    gap: 1px;
    margin-left: 3px;
}

.taskbar .open {
    width: 38px;
    margin: 0 3px;
    border-bottom-color: #76b0e0;
}

.taskbar .current {
    width: 44px;
    margin: 0;
    border-top-color: #3a3d3d;
    background-color: #3a3d3d;
}

.tray {
    display: flex;
    align-items: center;
    margin-left: auto;
    padding-right: 19px;
}

.tray button {
    width: 22px;
}

.lang, .clock {
    display: flex;
    flex-direction: column;
    align-items: center;
    gap: 2px;
    width: 32px;
    font-size: 11px;
    line-height: 14px;
}

.clock {
    align-items: flex-end;
    width: 54px;
    margin-right: 12px;
}

.clock .fa {
    font-size: 10px;
}
```
